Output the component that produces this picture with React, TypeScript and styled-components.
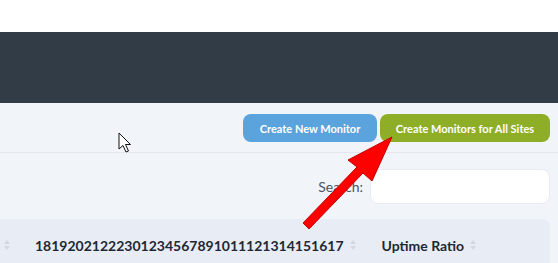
import React from "react";
import styled, { createGlobalStyle } from "styled-components";

const GlobalStyle = createGlobalStyle`
  html, body {
    margin: 0;
    padding: 0;
    background: #ffffff;
    font-family: Lato, "Noto Sans", sans-serif;
  }
`;

const Page = styled.div`
  position: relative;
  width: 558px;
  height: 263px;
  overflow: hidden;
  background: #f1f4f9;
`;

const TopStrip = styled.div`
  height: 32px;
  background: #ffffff;
`;

const NavBar = styled.div`
  height: 71px;
  background: #323c46;
`;

const Content = styled.div`
  padding: 0 8px 0 0;
`;

const Toolbar = styled.div`
  display: flex;
  justify-content: flex-end;
  gap: 3px;
  padding: 11px 8px 10px 0;
  margin-right: -8px;
  border-bottom: 1px solid #e3e8ef;
`;

const Button = styled.button<{ $tone: "blue" | "green" }>`
  width: ${(p) => (p.$tone === "blue" ? "134px" : "170px")};
  height: 28px;
  border: none;
  border-radius: 8px;
  padding: 0;
  font-family: Lato, sans-serif;
  font-size: 11px;
  font-weight: 700;
  color: #ffffff;
  background: ${(p) => (p.$tone === "blue" ? "#5aa3dd" : "#8fae28")};
  cursor: pointer;
`;

const SearchRow = styled.div`
  display: flex;
  justify-content: flex-end;
  align-items: center;
  gap: 7px;
  padding: 16px 0 15px;
`;

const SearchLabel = styled.label`
  font-size: 14px;
  color: #4b5563;
`;

const SearchInput = styled.input`
  width: 178px;
  height: 33px;
  box-sizing: content-box;
  border: 1px solid #e6ebf2;
  border-radius: 8px;
  background: #ffffff;
  padding: 0;
`;

const HeaderRow = styled.div`
  display: flex;
  align-items: center;
  height: 52px;
  background: #e8edf5;
  border-top-right-radius: 8px;
`;

const HeaderCell = styled.div<{ $left?: number; $right?: number }>`
  display: flex;
  align-items: center;
  gap: 6px;
  padding-left: ${(p) => p.$left ?? 0}px;
  padding-right: ${(p) => p.$right ?? 0}px;
  font-size: 14px;
  font-weight: 700;
  color: #1f2733;
  white-space: nowrap;
`;

const SortArrows = styled.span`
  display: inline-flex;
  flex-direction: column;
  gap: 2px;
`;

const Tri = styled.span<{ $down?: boolean }>`
  width: 0;
  height: 0;
  border-left: 3px solid transparent;
  border-right: 3px solid transparent;
  ${(p) =>
    p.$down
      ? "border-top: 4px solid #d3d9e0;"
      : "border-bottom: 4px solid #d3d9e0;"}
`;

const Overlay = styled.svg`
  position: absolute;
  left: 0;
  top: 0;
  pointer-events: none;
`;

function Sort() {
  return (
    <SortArrows>
      <Tri />
      <Tri $down />
    </SortArrows>
  );
}

export default function App() {
  return (
    <>
      <GlobalStyle />
      <Page>
        <TopStrip />
        <NavBar />
        <Content>
          <Toolbar>
            <Button $tone="blue">Create New Monitor</Button>
            <Button $tone="green">Create Monitors for All Sites</Button>
          </Toolbar>
          <SearchRow>
            <SearchLabel>Search:</SearchLabel>
            <SearchInput type="search" />
          </SearchRow>
          <HeaderRow>
            <HeaderCell $left={4} $right={25}>
              <Sort />
            </HeaderCell>
            <HeaderCell $right={26}>
              18192021222301234567891011121314151617
              <Sort />
            </HeaderCell>
            <HeaderCell>
              Uptime Ratio
              <Sort />
            </HeaderCell>
          </HeaderRow>
        </Content>
        <Overlay width="558" height="263" viewBox="0 0 558 263">
          <path
            d="M119 133 L119 149 L123 145.5 L126 152 L128.5 151 L125.5 144.5 L130.5 144.5 Z"
            fill="#ffffff"
            stroke="#111111"
            strokeWidth="1"
            strokeLinejoin="round"
          />
          <polygon
            points="392,137 348,160 357,167 303,223 309,229 363,173 372,181"
            fill="#ff0000"
            stroke="#c40000"
            strokeWidth="1"
            strokeLinejoin="miter"
          />
        </Overlay>
      </Page>
    </>
  );
}
